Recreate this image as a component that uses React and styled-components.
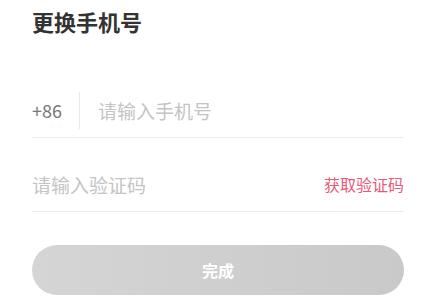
import React from 'react';
import styled, { createGlobalStyle } from 'styled-components';

const GlobalStyle = createGlobalStyle`
  body {
    margin: 0;
    background: #fff;
    font-family: "Noto Sans CJK SC", "Noto Sans", sans-serif;
  }
`;

const Page = styled.div`
  width: 437px;
  height: 302px;
  box-sizing: border-box;
  padding: 5px 33px 0 32px;
  background: #fff;
  overflow: hidden;
`;

const Title = styled.h1`
  margin: 0;
  font-size: 22px;
  line-height: 33px;
  font-weight: 700;
  color: #333;
`;

const Field = styled.div`
  display: flex;
  align-items: flex-end;
  box-sizing: border-box;
  height: ${props => props.height}px;
  margin-top: ${props => props.top}px;
  padding-bottom: ${props => props.bottom}px;
  border-bottom: 1px solid #ececec;
`;

const Prefix = styled.span`
  font-size: 18px;
  color: #777;
  padding-right: 17px;
  border-right: 1px solid #e8e8e8;
  line-height: 37px;
`;

const Placeholder = styled.span`
  flex: 1;
  font-size: 19px;
  line-height: 37px;
  color: #c4c4c4;
  padding-left: ${props => (props.indent ? 18 : 0)}px;
`;

const CodeLink = styled.span`
  font-size: 16px;
  line-height: 37px;
  color: #ec5878;
`;

const Submit = styled.button`
  display: block;
  width: 100%;
  height: 50px;
  margin-top: 33px;
  border: none;
  border-radius: 25px;
  background: linear-gradient(90deg, #d5d5d5, #c9c9c9);
  color: #fff;
  font-family: inherit;
  font-size: 16px;
  font-weight: 700;
`;

export default function App() {
  return (
    <Page>
      <GlobalStyle />
      <Title>更换手机号</Title>
      <Field height={59} top={41} bottom={8}>
        <Prefix>+86</Prefix>
        <Placeholder indent>请输入手机号</Placeholder>
      </Field>
      <Field height={74} top={0} bottom={8}>
        <Placeholder>请输入验证码</Placeholder>
        <CodeLink>获取验证码</CodeLink>
      </Field>
      <Submit>完成</Submit>
    </Page>
  );
}
